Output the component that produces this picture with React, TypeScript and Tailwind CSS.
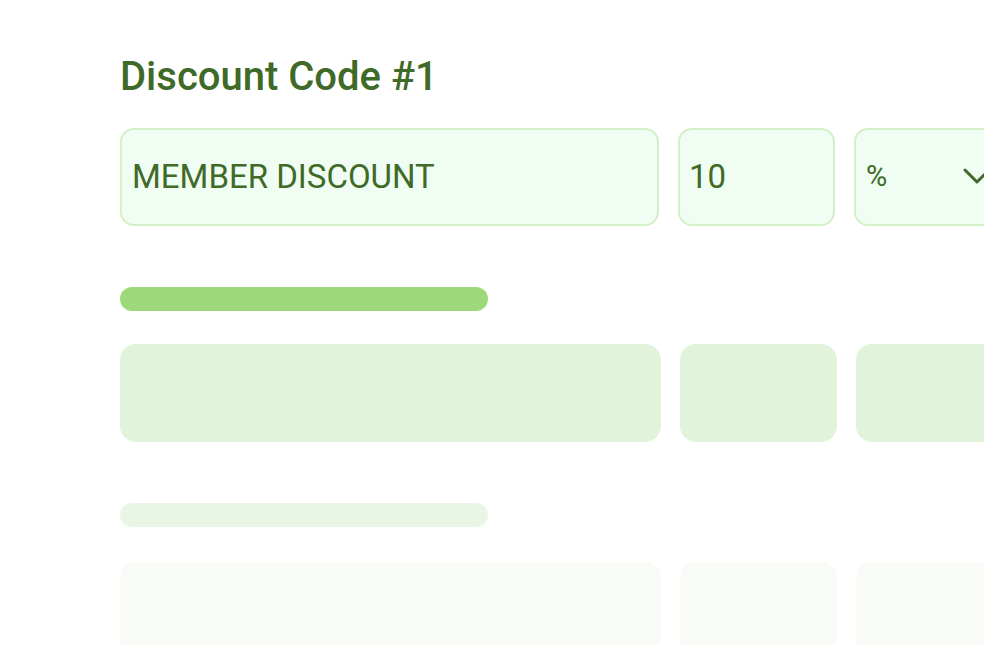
import React from "react";

export default function App() {
  return (
    <div className="w-[984px] h-[645px] overflow-hidden bg-white" style={{ fontFamily: "Roboto, 'Noto Sans', sans-serif" }}>
      <div className="pl-[120px] pt-[55px] w-[1200px]">
        <h1 className="text-[40px] leading-[44px] font-medium text-[#3f6a27]">Discount Code #1</h1>
        <div className="mt-[29px] flex gap-[19px] h-[98px]">
          <div className="w-[539px] rounded-[14px] border-2 border-[#d4f0c6] bg-[#effdf3] flex items-center pl-[10px] text-[33px] text-[#3f6a27]">
            MEMBER DISCOUNT
          </div>
          <div className="w-[157px] rounded-[14px] border-2 border-[#d4f0c6] bg-[#effdf3] flex items-center pl-[9px] text-[33px] text-[#3f6a27]">
            10
          </div>
          <div className="w-[220px] rounded-[14px] border-2 border-[#d4f0c6] bg-[#effdf3] flex items-center pl-[10px] text-[#3f6a27]">
            <span className="text-[29px]">%</span>
            <svg className="ml-[76px]" width="30" height="20" viewBox="0 0 30 20" fill="none">
              <path d="M2 3 L14 15 L26 3" stroke="#3f6a27" strokeWidth="3" strokeLinecap="round" strokeLinejoin="round" />
            </svg>
          </div>
        </div>
        <div className="mt-[61px] w-[368px] h-[24px] rounded-full bg-[#9dd97a]" />
        <div className="mt-[33px] flex gap-[19px] h-[98px]">
          <div className="w-[541px] rounded-[16px] bg-[#e1f3da]" />
          <div className="w-[157px] rounded-[16px] bg-[#e1f3da]" />
          <div className="w-[220px] rounded-[16px] bg-[#e1f3da]" />
        </div>
        <div className="mt-[61px] w-[368px] h-[24px] rounded-full bg-[#eaf6e5]" />
        <div className="mt-[35px] flex gap-[19px] h-[98px]">
          <div className="w-[541px] rounded-[16px] bg-[#f8fbf6]" />
          <div className="w-[157px] rounded-[16px] bg-[#f8fbf6]" />
          <div className="w-[220px] rounded-[16px] bg-[#f8fbf6]" />
        </div>
      </div>
    </div>
  );
}
